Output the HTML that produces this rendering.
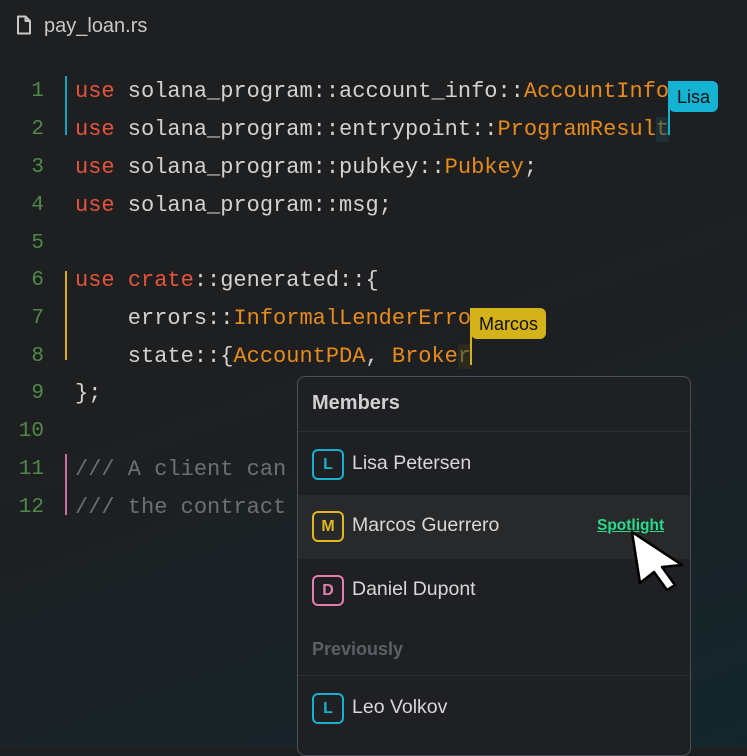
<!DOCTYPE html>
<html><head><meta charset="utf-8"><style>
*{margin:0;padding:0;box-sizing:border-box}
body{width:747px;height:747px;overflow:hidden;position:relative;background:linear-gradient(160deg,#1e1f21 0%,#1e1f21 45%,#1a2328 75%,#13272b 100%);font-family:"Liberation Sans",sans-serif}
.file{position:absolute;left:44px;top:15px;font-size:20px;color:#c9c9c9}
.ln{position:absolute;left:0;width:44px;text-align:right;font-family:"Liberation Mono",monospace;font-size:21px;color:#4f8a49;line-height:38px}
.code{position:absolute;left:75px;font-family:"Liberation Mono",monospace;font-size:22px;color:#d2d2d2;line-height:38px;white-space:pre}
.k{color:#e5543c}.t{color:#e68b1c}.c{color:#6d7073}
.bar{position:absolute;left:65px;width:2px}
.tag{position:absolute;height:31px;font-size:18px;color:#111;padding:6px 8px 0 8px;border-radius:0 6px 6px 6px}
.cur{position:absolute;width:2px}
.panel{position:absolute;left:297px;top:376px;width:394px;height:380px;background:#1f2023;border:1px solid #4b5056;border-radius:8px;overflow:hidden}
.row{position:absolute;left:0;width:392px;height:62px}
.av{position:absolute;left:14px;top:16px;width:32px;height:31px;border:2px solid;border-radius:6px;font-weight:bold;font-size:16px;text-align:center;line-height:27px}
.nm{position:absolute;left:54px;top:19px;font-size:19.5px;color:#d8d8d8}
.sep{position:absolute;left:0;width:392px;height:1px;background:#2c2e31}
</style></head><body>
<svg style="position:absolute;left:16px;top:15px" width="16" height="20" viewBox="0 0 16 20"><path d="M2 1.5h7.5l4.5 4.5v12.5h-12z M9.5 1.5v4.5h4.5" fill="none" stroke="#c9c9c9" stroke-width="2" stroke-linejoin="round"/></svg>
<div class="file">pay_loan.rs</div>

<div class="ln" style="top:73px">1</div><div class="ln" style="top:111px">2</div><div class="ln" style="top:149px">3</div><div class="ln" style="top:187px">4</div><div class="ln" style="top:225px">5</div><div class="ln" style="top:262px">6</div><div class="ln" style="top:300px">7</div><div class="ln" style="top:338px">8</div><div class="ln" style="top:375px">9</div><div class="ln" style="top:413px">10</div><div class="ln" style="top:451px">11</div><div class="ln" style="top:489px">12</div>

<div class="bar" style="top:76px;height:59px;background:#14a3c0"></div>
<div class="bar" style="top:271px;height:89px;background:#d4ad1a"></div>
<div class="bar" style="top:454px;height:61px;background:#d06d9f"></div>

<div class="code" style="top:73px"><span class="k">use</span> solana_program::account_info::<span class="t">AccountInfo</span></div>
<div class="code" style="top:111px"><span class="k">use</span> solana_program::entrypoint::<span class="t">ProgramResul</span><span style="color:#7a6a3a;background:#1e3037">t</span></div>
<div class="code" style="top:149px"><span class="k">use</span> solana_program::pubkey::<span class="t">Pubkey</span>;</div>
<div class="code" style="top:187px"><span class="k">use</span> solana_program::msg;</div>
<div class="code" style="top:262px"><span class="k">use</span> <span class="k">crate</span>::generated::{</div>
<div class="code" style="top:300px">    errors::<span class="t">InformalLenderErro</span></div>
<div class="code" style="top:338px">    state::{<span class="t">AccountPDA</span>, <span class="t">Broke</span><span style="color:#7a6a3a;background:#2a2a1e">r</span></div>
<div class="code" style="top:375px">};</div>
<div class="code c" style="top:451px">/// A client can                         nctio</div>
<div class="code c" style="top:489px">/// the contract</div>

<div class="cur" style="left:668px;top:81px;height:54px;background:#14b3d3"></div>
<div class="tag" style="left:669px;top:81px;background:#14b3d3">Lisa</div>
<div class="cur" style="left:470px;top:308px;height:57px;background:#d4b21a"></div>
<div class="tag" style="left:471px;top:308px;background:#d4b21a">Marcos</div>

<div class="panel">
<div style="position:absolute;left:14px;top:15px;font-size:20px;font-weight:bold;color:#d0d0d0">Members</div>
<div class="sep" style="top:54px"></div>
<div class="row" style="top:56px"><div class="av" style="border-color:#17b0cf;color:#17b0cf">L</div><div class="nm">Lisa Petersen</div></div>
<div class="row" style="top:118px;height:64px;background:#28292b"><div class="av" style="border-color:#e0b91b;color:#e0b91b">M</div><div class="nm">Marcos Guerrero</div>
<div style="position:absolute;left:299px;top:22px;font-size:15.5px;font-weight:bold;color:#2bd98a;text-decoration:underline">Spotlight</div></div>
<div class="row" style="top:182px"><div class="av" style="border-color:#e57db0;color:#e57db0">D</div><div class="nm">Daniel Dupont</div></div>
<div style="position:absolute;left:14px;top:262px;font-size:18px;font-weight:bold;color:#5b6067">Previously</div>
<div class="sep" style="top:298px"></div>
<div class="row" style="top:300px"><div class="av" style="border-color:#17b0cf;color:#17b0cf">L</div><div class="nm">Leo Volkov</div></div>
</div>

<svg style="position:absolute;left:630px;top:530px" width="60" height="62" viewBox="0 0 60 62"><path d="M2 2 L52 35 L32 37 L45 55 L37 60 L24 42 L10 53 Z" fill="#fff" stroke="#000" stroke-width="2.5" stroke-linejoin="round"/></svg>
</body></html>
